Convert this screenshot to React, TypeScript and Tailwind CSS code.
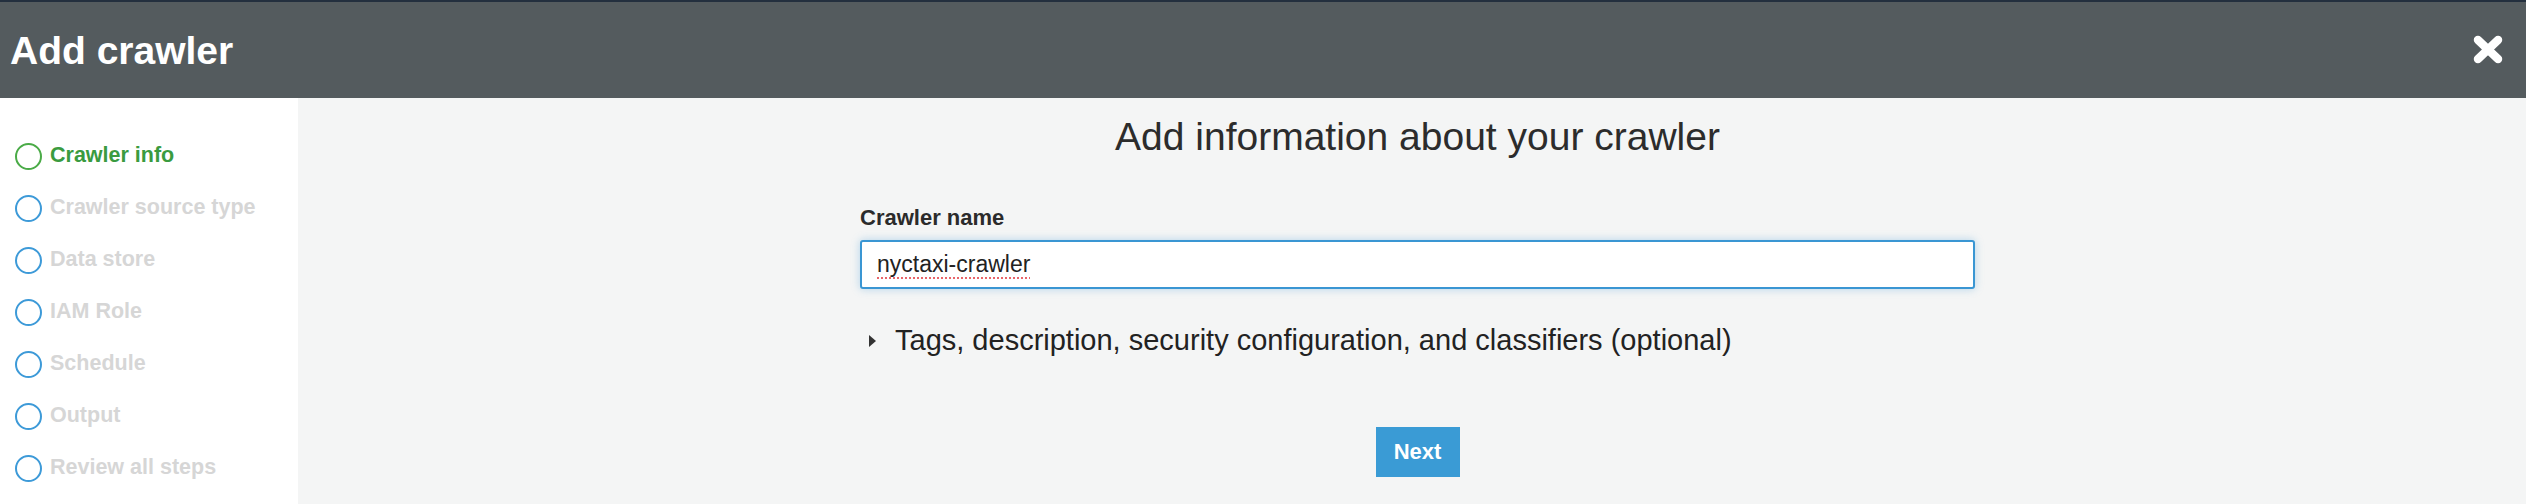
import React from "react";

const steps = [
  "Crawler info",
  "Crawler source type",
  "Data store",
  "IAM Role",
  "Schedule",
  "Output",
  "Review all steps",
];

export default function App() {
  return (
    <div
      className="w-[2526px] h-[504px] flex flex-col overflow-hidden"
      style={{ fontFamily: '"Liberation Sans", Arial, sans-serif' }}
    >
      <div className="h-[2px] bg-[#232f3e]" />
      <div className="h-[96px] bg-[#545b5e] flex items-center justify-between pl-[10px] pr-[23px]">
        <h1 className="text-[39px] leading-none font-bold text-white">Add crawler</h1>
        <button className="w-[30px] h-[30px] flex items-center justify-center">
          <svg width="30" height="30" viewBox="0 0 30 30">
            <path
              d="M5 5 L25 24 M25 5 L5 24"
              stroke="#ffffff"
              strokeWidth="8.5"
              strokeLinecap="round"
              fill="none"
            />
          </svg>
        </button>
      </div>
      <div className="flex flex-1">
        <aside className="w-[298px] bg-white pt-[32px] flex flex-col">
          {steps.map((s, i) => (
            <div key={s} className="h-[52px] flex items-center pl-[15px] gap-[8px]">
              <span
                className={
                  i === 0
                    ? "w-[27px] h-[27px] rounded-full border-[2.5px] border-[#4aab47]"
                    : "w-[27px] h-[27px] rounded-full border-[2.5px] border-[#3d9ad8]"
                }
              />
              <span
                className={
                  i === 0
                    ? "text-[21.5px] leading-none font-bold text-[#3a9b3f]"
                    : "text-[21.5px] leading-none font-bold text-[#d6d6d6]"
                }
              >
                {s}
              </span>
            </div>
          ))}
        </aside>
        <main className="flex-1 bg-[#f4f5f5]">
          <div className="w-[1115px] ml-[562px] pt-[19px] flex flex-col">
            <h2 className="text-[39px] leading-none text-center text-[#2c2c2c]">
              Add information about your crawler
            </h2>
            <label className="mt-[51px] text-[22px] leading-none font-bold text-[#2b2b2b]">
              Crawler name
            </label>
            <div className="mt-[11px] h-[49px] bg-white border-2 border-[#3a96d3] rounded-[3px] shadow-[0_0_9px_rgba(58,150,211,0.35)] flex items-center pl-[15px]">
              <span className="text-[23px] leading-none text-[#222] underline decoration-dotted decoration-[#e8656a] decoration-2 underline-offset-[5px]">
                nyctaxi-crawler
              </span>
            </div>
            <div className="mt-[37px] flex items-center pl-[9px] gap-[19px]">
              <svg width="7" height="12" viewBox="0 0 7 12">
                <path d="M0 0 L7 6 L0 12 Z" fill="#333" />
              </svg>
              <span className="text-[29px] leading-none text-[#222]">
                Tags, description, security configuration, and classifiers (optional)
              </span>
            </div>
            <div className="mt-[72px] flex justify-center">
              <button className="w-[84px] h-[50px] bg-[#3a9bd5] text-white text-[22px] font-bold leading-none">
                Next
              </button>
            </div>
          </div>
        </main>
      </div>
    </div>
  );
}
